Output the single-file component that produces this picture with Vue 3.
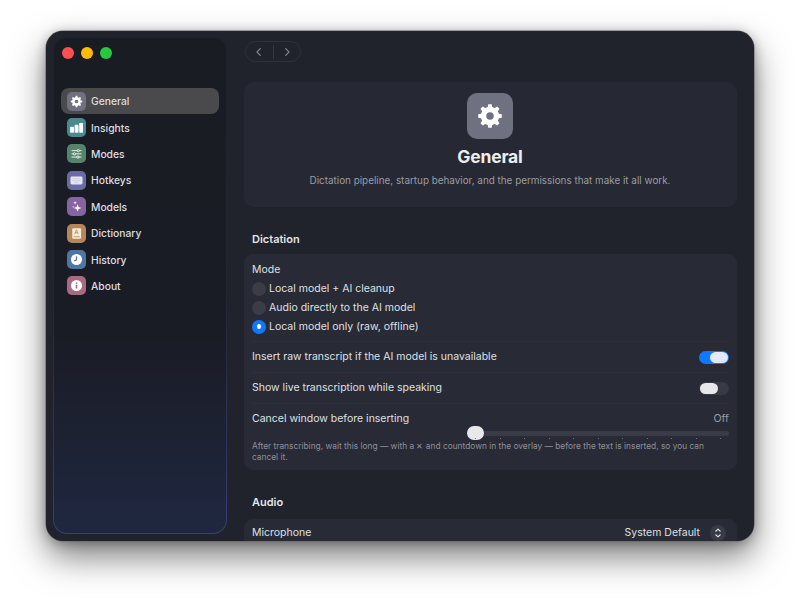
<script setup>
function makeGear() {
  const teeth = 8
  const outer = 10.2
  const inner = 7.9
  const pts = []
  for (let i = 0; i < teeth; i++) {
    const a = (i * 2 * Math.PI) / teeth - Math.PI / 2
    const w = Math.PI / teeth
    const set = [
      [inner, a - w * 0.62],
      [outer, a - w * 0.36],
      [outer, a + w * 0.36],
      [inner, a + w * 0.62]
    ]
    set.forEach(([r, t]) => pts.push(`${(12 + r * Math.cos(t)).toFixed(2)} ${(12 + r * Math.sin(t)).toFixed(2)}`))
  }
  return `M${pts.join('L')}Z M12 8.8a3.2 3.2 0 1 0 0 6.4a3.2 3.2 0 1 0 0-6.4Z`
}
const gear = makeGear()

const navItems = [
  { label: 'General', icon: 'general', color: '#6f7180', active: true },
  { label: 'Insights', icon: 'insights', color: '#4a8a8e' },
  { label: 'Modes', icon: 'modes', color: '#55836b' },
  { label: 'Hotkeys', icon: 'hotkeys', color: '#6a6aa4' },
  { label: 'Models', icon: 'models', color: '#85649f' },
  { label: 'Dictionary', icon: 'dictionary', color: '#b5865a' },
  { label: 'History', icon: 'history', color: '#4f75a5' },
  { label: 'About', icon: 'about', color: '#a96a80' }
]
const modes = [
  { label: 'Local model + AI cleanup', on: false },
  { label: 'Audio directly to the AI model', on: false },
  { label: 'Local model only (raw, offline)', on: true }
]
const ticks = Array.from({ length: 11 }, (_, i) => i)
</script>

<template>
  <div class="page">
    <div class="window">
      <aside class="sidebar">
        <div class="traffic">
          <span class="light red"></span>
          <span class="light yellow"></span>
          <span class="light green"></span>
        </div>
        <nav class="nav">
          <div v-for="item in navItems" :key="item.label" class="nav-item" :class="{ active: item.active }">
            <span class="nav-icon" :style="{ background: item.color }">
              <svg viewBox="0 0 24 24" class="glyph">
                <path v-if="item.icon === 'general'" :d="gear" fill="#fff" fill-rule="evenodd" transform="translate(2.4 2.4) scale(.8)" />
                <g v-else-if="item.icon === 'insights'" fill="#fff">
                  <rect x="3" y="11" width="5.4" height="8.5" rx="1" />
                  <rect x="9.4" y="8" width="5.4" height="11.5" rx="1" />
                  <rect x="15.8" y="5.5" width="5.4" height="14" rx="1" />
                </g>
                <g v-else-if="item.icon === 'modes'" stroke="#e8efe9" stroke-width="1.4" fill="#55836b">
                  <path d="M5 8h14M5 12.5h14M5 17h14" />
                  <circle cx="14.5" cy="8" r="1.6" />
                  <circle cx="9" cy="12.5" r="1.6" />
                  <circle cx="14" cy="17" r="1.6" />
                </g>
                <g v-else-if="item.icon === 'hotkeys'">
                  <rect x="3.5" y="6.5" width="17" height="11" rx="2" fill="#e6e6f4" />
                  <path d="M6 9.5h12M6 12h12M8.5 15h7" stroke="#c4c4de" stroke-width="1" />
                </g>
                <g v-else-if="item.icon === 'models'" fill="#fff">
                  <path d="M13.5 8.5l1.4 4.1 4.1 1.4-4.1 1.4-1.4 4.1-1.4-4.1L8 14l4.1-1.4Z" />
                  <path d="M10 4.2l.7 1.9 1.9.7-1.9.7L10 9.4l-.7-1.9-1.9-.7 1.9-.7Z" />
                  <circle cx="7.5" cy="12.5" r="1" />
                </g>
                <g v-else-if="item.icon === 'dictionary'">
                  <rect x="6" y="4.5" width="12.5" height="15" rx="1.6" fill="#f6ead9" />
                  <path d="M9.6 12.8l2.4-6 2.4 6M10.5 10.9h3" stroke="#b5865a" stroke-width="1.1" fill="none" />
                  <path d="M8 16.5h8.5" stroke="#b5865a" stroke-width="1.1" />
                </g>
                <g v-else-if="item.icon === 'history'">
                  <circle cx="12" cy="12" r="7.8" fill="#fff" />
                  <path d="M12 7.5V12.4L8.8 14" stroke="#4f75a5" stroke-width="1.6" fill="none" />
                </g>
                <g v-else>
                  <circle cx="12" cy="12" r="7.8" fill="#fff" />
                  <circle cx="12" cy="8.6" r="1.2" fill="#a96a80" />
                  <rect x="10.9" y="10.8" width="2.2" height="5.6" rx=".6" fill="#a96a80" />
                </g>
              </svg>
            </span>
            <span class="nav-label">{{ item.label }}</span>
          </div>
        </nav>
      </aside>

      <main class="main">
        <div class="history-nav">
          <span class="history-btn">
            <svg viewBox="0 0 12 12" class="chevron"><path d="M8 1.5 3.5 6 8 10.5" /></svg>
          </span>
          <span class="history-btn right">
            <svg viewBox="0 0 12 12" class="chevron"><path d="M4 1.5 8.5 6 4 10.5" /></svg>
          </span>
        </div>

        <section class="hero">
          <div class="hero-icon">
            <svg viewBox="0 0 24 24" class="hero-gear"><path :d="gear" fill="#fff" fill-rule="evenodd" /></svg>
          </div>
          <h1 class="hero-title">General</h1>
          <p class="hero-sub">Dictation pipeline, startup behavior, and the permissions that make it all work.</p>
        </section>

        <h2 class="section-title first">Dictation</h2>
        <section class="card">
          <div class="mode-block">
            <div class="row-label mode-title">Mode</div>
            <div v-for="mode in modes" :key="mode.label" class="radio-row">
              <span class="radio" :class="{ on: mode.on }"></span>
              <span class="row-label">{{ mode.label }}</span>
            </div>
          </div>
          <div class="row line">
            <span class="row-label">Insert raw transcript if the AI model is unavailable</span>
            <span class="switch on"><span class="knob"></span></span>
          </div>
          <div class="row line">
            <span class="row-label">Show live transcription while speaking</span>
            <span class="switch"><span class="knob"></span></span>
          </div>
          <div class="slider-block line">
            <div class="slider-head">
              <span class="row-label">Cancel window before inserting</span>
              <span class="off">Off</span>
            </div>
            <div class="slider">
              <div class="track"></div>
              <div class="thumb"></div>
              <div class="ticks"><span v-for="t in ticks" :key="t" class="tick"></span></div>
            </div>
            <p class="hint">After transcribing, wait this long — with a ✕ and countdown in the overlay — before the text is inserted, so you can cancel it.</p>
          </div>
        </section>

        <h2 class="section-title second">Audio</h2>
        <section class="card audio">
          <div class="row audio-row">
            <span class="row-label">Microphone</span>
            <span class="picker">
              <span class="row-label">System Default</span>
              <span class="stepper">
                <svg viewBox="0 0 12 14" class="updown"><path d="M3 5.2 6 2.4l3 2.8M3 8.8l3 2.8 3-2.8" /></svg>
              </span>
            </span>
          </div>
        </section>
      </main>
    </div>
  </div>
</template>

<style>
html, body { margin: 0; background: #fff; }
</style>

<style scoped>
.page {
  width: 800px;
  height: 602px;
  overflow: hidden;
  box-sizing: border-box;
  padding: 31px 46px 0;
  background: #fff;
  font-family: Inter, "Liberation Sans", sans-serif;
}
.window {
  height: 510px;
  border-radius: 17px;
  background: #20222c;
  box-shadow: 0 0 0 .5px #66676d, 0 16px 34px rgba(0, 0, 0, .5), 0 2px 12px rgba(0, 0, 0, .3);
  display: flex;
  overflow: hidden;
}
.sidebar {
  width: 174px;
  margin: 6px 0 7px 7px;
  flex: none;
  box-sizing: border-box;
  border-radius: 14px;
  border: 1px solid transparent;
  background:
    linear-gradient(180deg, #1a1c24 0%, #1a1c25 60%, #1f2740 100%) padding-box,
    linear-gradient(180deg, #1f212a 0%, #22252f 50%, #34407c 100%) border-box;
  padding: 9px 7px 0;
}
.traffic { display: flex; gap: 7px; padding-left: 1px; }
.light { width: 12px; height: 12px; border-radius: 50%; }
.red { background: #ff4f52; }
.yellow { background: #febc05; }
.green { background: #28c840; }
.nav { margin-top: 29px; display: flex; flex-direction: column; }
.nav-item {
  height: 26.4px;
  display: flex;
  align-items: center;
  gap: 5px;
  padding-left: 6px;
  border-radius: 8px;
}
.nav-item.active { background: #4a4a4c; }
.nav-icon {
  width: 19px;
  height: 19px;
  border-radius: 5px;
  display: flex;
  align-items: center;
  justify-content: center;
  flex: none;
}
.glyph { width: 17px; height: 17px; }
.nav-label { font-size: 10.3px; color: #dcdde0; font-weight: 500; }

.main { flex: 1; min-width: 0; padding: 10px 17px 0; }
.history-nav {
  width: 56px;
  height: 21px;
  margin-left: 1px;
  box-sizing: border-box;
  border: 1px solid #2f323d;
  border-radius: 11px;
  display: flex;
  align-items: center;
}
.history-btn { flex: 1; height: 14px; display: flex; align-items: center; justify-content: center; }
.history-btn.right { border-left: 1px solid #343742; }
.chevron { width: 10px; height: 10px; fill: none; stroke: #81838c; stroke-width: 1.3; }
.hero {
  margin-top: 20px;
  height: 125px;
  border-radius: 10px;
  background: #262933;
  display: flex;
  flex-direction: column;
  align-items: center;
  padding-top: 11px;
  padding-right: 1px;
  box-sizing: border-box;
}
.hero-icon {
  width: 46px;
  height: 46px;
  border-radius: 10px;
  background: #6f7180;
  display: flex;
  align-items: center;
  justify-content: center;
}
.hero-gear { width: 28px; height: 28px; }
.hero-title { margin: 7px 0 0; font-size: 17.5px; line-height: 22px; font-weight: 700; color: #eceded; letter-spacing: -.2px; }
.hero-sub { margin: 5px 0 0; font-size: 9.9px; line-height: 14px; color: #9a9ca5; }

.section-title { margin: 0; font-size: 11px; line-height: 14px; font-weight: 600; color: #e2e3e5; padding-left: 8px; }
.section-title.first { margin-top: 25px; }
.section-title.second { margin-top: 25px; }
.card {
  margin-top: 8px;
  border-radius: 9px;
  background: #282a35;
  padding: 0 8px;
}
.mode-block { padding-top: 9px; height: 87px; box-sizing: border-box; }
.row-label { font-size: 10.5px; line-height: 14px; color: #dfe0e3; white-space: nowrap; }
.mode-title { height: 14px; margin-bottom: 2px; }
.radio-row { display: flex; align-items: center; gap: 3px; height: 19px; }
.radio { width: 14px; height: 14px; border-radius: 50%; background: #3a3c46; position: relative; flex: none; }
.radio.on { background: #0f78ff; }
.radio.on::after {
  content: "";
  position: absolute;
  left: 4.75px;
  top: 4.75px;
  width: 4.5px;
  height: 4.5px;
  border-radius: 50%;
  background: #fff;
}
.row { height: 31px; display: flex; align-items: center; justify-content: space-between; }
.line { border-top: 1px solid #2d2f3a; box-sizing: border-box; }
.switch {
  width: 30px;
  height: 13px;
  border-radius: 7px;
  background: #383a45;
  display: flex;
  align-items: center;
  padding: 0 1px;
  box-sizing: border-box;
}
.switch.on { background: #0f78ff; justify-content: flex-end; }
.knob { width: 18px; height: 11px; border-radius: 6px; background: #e8e8ea; }
.switch.on .knob { background: #e3e9fb; }
.slider-block { padding-top: 8px; padding-bottom: 7px; }
.slider-head { display: flex; justify-content: space-between; align-items: center; }
.off { font-size: 10.5px; line-height: 14px; color: #9a9ca5; }
.slider { position: relative; height: 14px; margin-left: 215px; }
.track { position: absolute; left: 8px; right: 0; top: 5px; height: 5px; border-radius: 3px; background: #393b46; }
.thumb { position: absolute; left: 0; top: 0; width: 17px; height: 14px; border-radius: 7px; background: #e8e8ea; }
.ticks { position: absolute; left: 8px; right: 8px; top: 12px; display: flex; justify-content: space-between; }
.tick { width: 1px; height: 1px; background: #73757e; }
.hint { margin: 1px 0 0; font-size: 8.35px; line-height: 11px; color: #8e9099; }
.audio { margin-top: 10px; }
.audio-row { height: 28px; }
.picker { display: flex; align-items: center; gap: 10px; }
.stepper {
  width: 16px;
  height: 16px;
  border-radius: 50%;
  background: #383a45;
  display: flex;
  align-items: center;
  justify-content: center;
  margin-right: 3px;
}
.updown { width: 10px; height: 12px; fill: none; stroke: #e6e7ea; stroke-width: 1.3; }
</style>
